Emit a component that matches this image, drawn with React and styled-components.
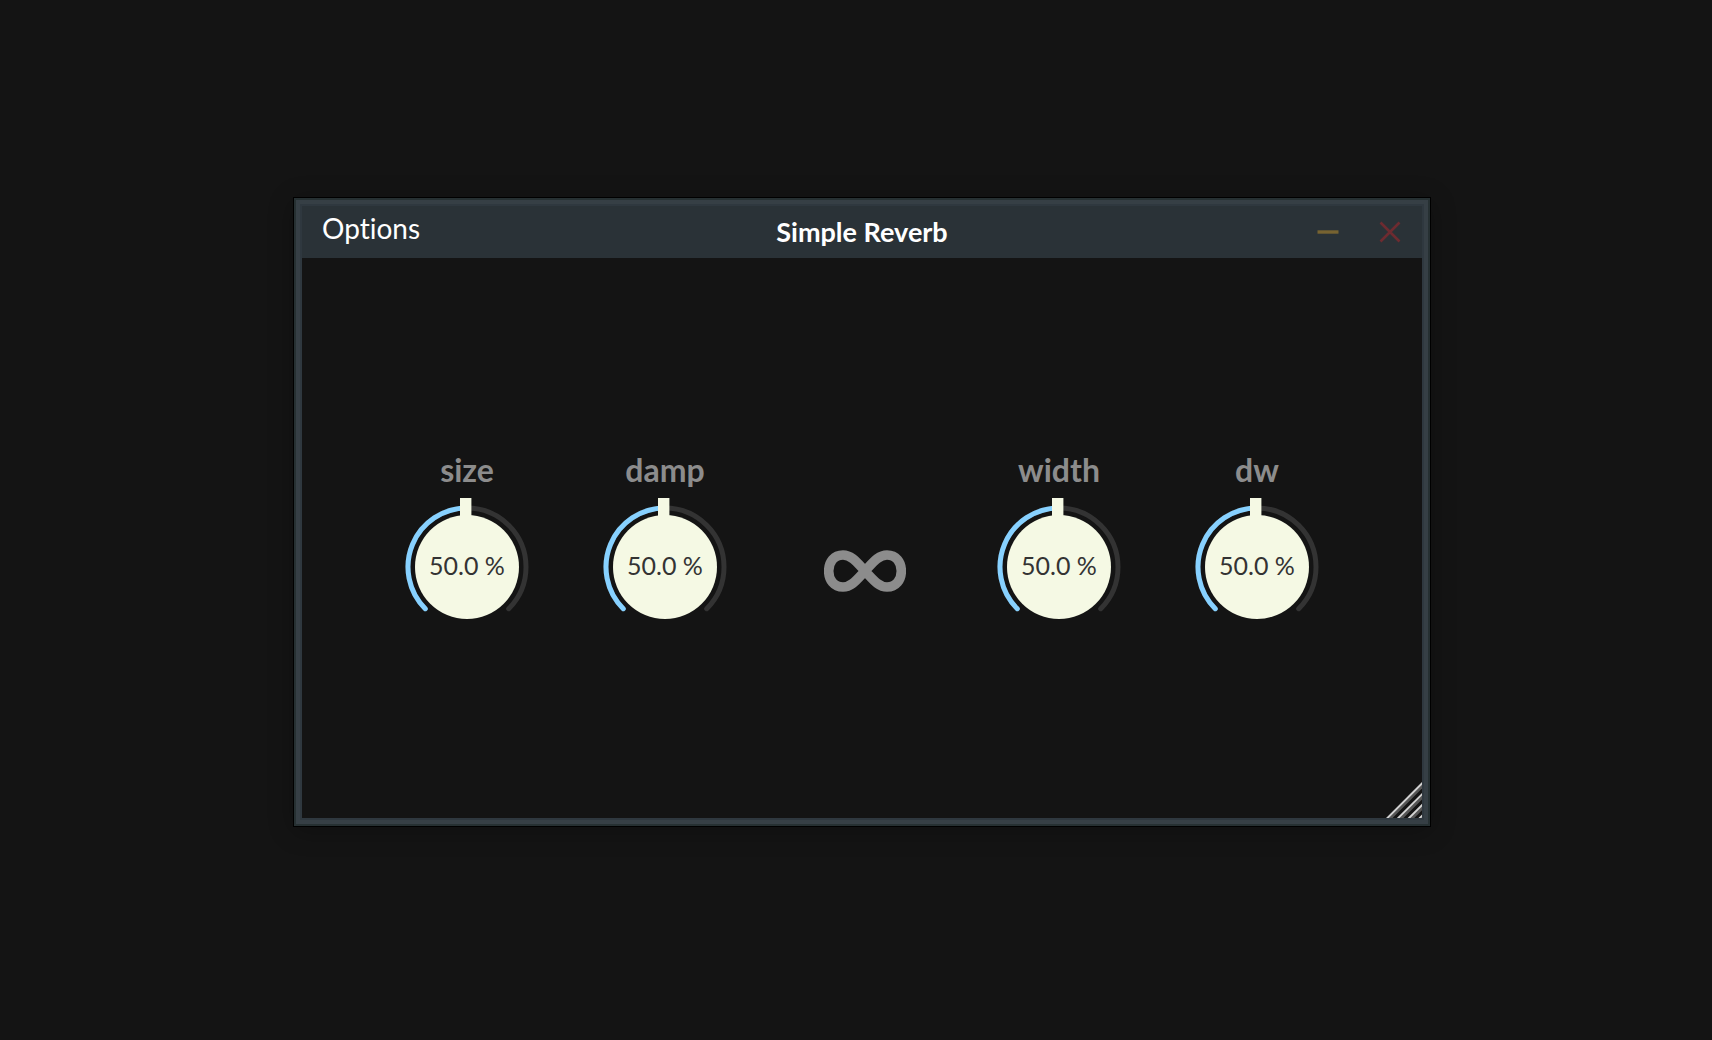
import React, { useState } from "react";
import styled, { createGlobalStyle } from "styled-components";

const GlobalStyle = createGlobalStyle`
  *, *::before, *::after { box-sizing: border-box; }
  body { margin: 0; background: #141414; }
  button { border: 0; padding: 0; background: none; font: inherit; color: inherit; cursor: pointer; }
`;

const Desktop = styled.main`
  min-height: 100vh;
  display: flex;
  align-items: center;
  justify-content: center;
  padding: 0 0 16px 12px;
  background: #141414;
  font-family: Lato, "Open Sans", sans-serif;
  font-variant-ligatures: none;
`;

const PluginWindow = styled.section`
  width: 100%;
  max-width: 1136px;
  border: 2px solid #263032;
  outline: 1px solid #000;
  box-shadow: 0 4px 24px rgba(0, 0, 0, 0.3);
`;

const Frame = styled.div`
  border: 4px solid #363f45;
`;

const Inner = styled.div`
  border: 2px solid #2f383f;
`;

const TitleBar = styled.header`
  display: grid;
  grid-template-columns: 1fr auto 1fr;
  align-items: center;
  height: 52px;
  padding: 0 20px;
  background: #2a3237;
  color: #fff;
`;

const OptionsButton = styled.button`
  justify-self: start;
  padding-bottom: 8px;
  font-size: 28px;
  line-height: 36px;
`;

const Title = styled.h1`
  margin: 0;
  font-size: 27px;
  line-height: 36px;
  font-weight: 700;
`;

const WindowControls = styled.div`
  display: flex;
  justify-self: end;
  gap: 38px;
`;

const ControlButton = styled.button`
  display: flex;
  width: 24px;
  height: 24px;
  color: ${(p) => p.$color};
`;

const Panel = styled.div`
  position: relative;
  display: flex;
  align-items: center;
  justify-content: center;
  min-height: 560px;
  background: #141414;
`;

const Controls = styled.div`
  display: grid;
  grid-template-columns: 126px 126px 124px 126px 126px;
  column-gap: 72px;
  align-items: end;
  padding-top: 3px;
`;

const KnobCell = styled.div`
  display: flex;
  flex-direction: column;
  align-items: center;
  gap: 7px;
`;

const KnobLabel = styled.label`
  font-size: 32px;
  line-height: 40px;
  font-weight: 700;
  color: #8c8c8c;
`;

const Dial = styled.div`
  display: grid;
  width: 126px;
  height: 132px;

  > * { grid-area: 1 / 1; }
`;

const Value = styled.output`
  padding-top: 4px;
  place-self: center;
  font-size: 25px;
  line-height: 32px;
  color: #333;
`;

const RangeInput = styled.input`
  width: 100%;
  height: 100%;
  margin: 0;
  opacity: 0;
  cursor: pointer;
`;

const FreezeButton = styled.button`
  display: flex;
  align-items: center;
  justify-content: center;
  height: 116px;
  padding-left: 6px;
  color: #8c8c8c;
`;

const ResizeGrip = styled.svg`
  position: absolute;
  right: 0;
  bottom: 0;
  cursor: nwse-resize;
`;

const point = (deg) => {
  const a = (deg * Math.PI) / 180;
  return `${63 + 59 * Math.sin(a)} ${70 - 59 * Math.cos(a)}`;
};

const arc = (from, to) =>
  `M${point(from)}A59 59 0 ${to - from > 180 ? 1 : 0} 1 ${point(to)}`;

function Knob({ name }) {
  const [value, setValue] = useState(50);
  const angle = -135 + value * 2.7;
  const id = `knob-${name}`;
  return (
    <KnobCell>
      <KnobLabel htmlFor={id}>{name}</KnobLabel>
      <Dial>
        <svg width="126" height="132" viewBox="0 0 126 132" fill="none" aria-hidden="true">
          <path d={arc(-135, 135)} stroke="#333" strokeWidth="5" strokeLinecap="round" />
          <path d={arc(-135, angle)} stroke="#87d1ff" strokeWidth="5" strokeLinecap="round" />
          <circle cx="63" cy="70" r="52" fill="#f5f9e4" />
          <rect x="56" y="1" width="11.4" height="24" fill="#f5f9e4" transform={`rotate(${angle} 63 70)`} />
        </svg>
        <Value htmlFor={id}>{value.toFixed(1)} %</Value>
        <RangeInput
          id={id}
          type="range"
          min="0"
          max="100"
          step="0.1"
          value={value}
          onChange={(e) => setValue(Number(e.target.value))}
        />
      </Dial>
    </KnobCell>
  );
}

export default function App() {
  const [frozen, setFrozen] = useState(false);
  return (
    <>
      <GlobalStyle />
      <Desktop>
        <PluginWindow>
          <Frame>
            <Inner>
              <TitleBar>
                <OptionsButton type="button">Options</OptionsButton>
                <Title>Simple Reverb</Title>
                <WindowControls>
                  <ControlButton type="button" aria-label="Minimise" $color="#776331">
                    <svg width="24" height="24" viewBox="0 0 24 24" aria-hidden="true">
                      <path d="M1.5 12h21" stroke="currentColor" strokeWidth="3.4" />
                    </svg>
                  </ControlButton>
                  <ControlButton type="button" aria-label="Close" $color="#6d2b30">
                    <svg width="24" height="24" viewBox="0 0 24 24" aria-hidden="true">
                      <path d="M2.5 2.5l19 19M21.5 2.5l-19 19" stroke="currentColor" strokeWidth="2.6" />
                    </svg>
                  </ControlButton>
                </WindowControls>
              </TitleBar>
              <Panel>
                <Controls>
                  <Knob name="size" />
                  <Knob name="damp" />
                  <FreezeButton
                    type="button"
                    aria-label="Freeze"
                    aria-pressed={frozen}
                    onClick={() => setFrozen(!frozen)}
                  >
                    <svg width="82" height="42" viewBox="0 0 82 42" fill="none" aria-hidden="true">
                      <path
                        d="M41 21C33 12.500 27.500 5 19 5C10 5 4.700 12 4.700 21C4.700 30 10 37 19 37C27.500 37 33 29.500 41 21C49 12.500 54.500 5 63 5C72 5 77.300 12 77.300 21C77.300 30 72 37 63 37C54.500 37 49 29.500 41 21Z"
                        stroke="currentColor"
                        strokeWidth="9.6"
                      />
                    </svg>
                  </FreezeButton>
                  <Knob name="width" />
                  <Knob name="dw" />
                </Controls>
                <ResizeGrip width="36" height="36" viewBox="0 0 36 36" aria-hidden="true">
                  {[0, 10.8, 21.6, 32.4].map((p) => (
                    <g key={p} strokeWidth="2.7">
                      <path d={`M${p} 38L38 ${p}`} stroke="#d3d3d3" />
                      <path d={`M${p + 2.7} 38L38 ${p + 2.7}`} stroke="#555" />
                    </g>
                  ))}
                </ResizeGrip>
              </Panel>
            </Inner>
          </Frame>
        </PluginWindow>
      </Desktop>
    </>
  );
}
